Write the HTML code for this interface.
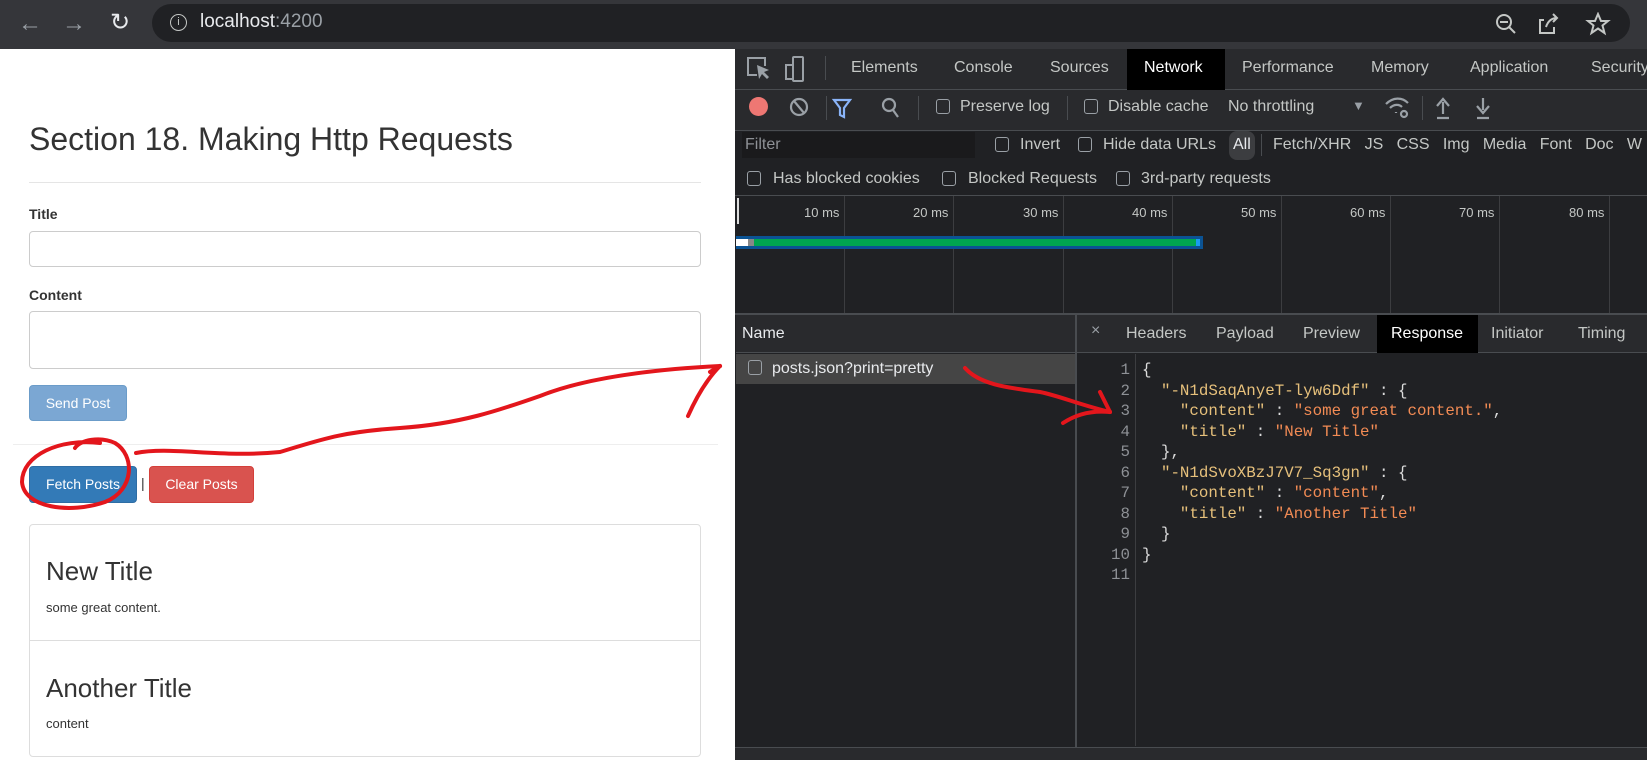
<!DOCTYPE html>
<html><head><meta charset="utf-8"><style>
*{box-sizing:border-box;margin:0;padding:0}
body{width:1647px;height:760px;overflow:hidden;background:#fff;font-family:"Liberation Sans",sans-serif;position:relative}
.a{position:absolute;white-space:nowrap}
.dt{color:#c4c7c5;font-size:16px}
.cb{position:absolute;width:14px;height:15px;border:1.5px solid #9aa0a6;border-radius:3px}
.mono{font-family:"Liberation Mono",monospace;font-size:15.8px;line-height:20.5px}
.k{color:#e6c07b}.v{color:#f28b54}.p{color:#dcdcdc}
</style></head><body>
<!-- browser bar -->
<div class="a" style="left:0;top:0;width:1647px;height:49px;background:#35363a"></div>
<div class="a" style="left:152px;top:4px;width:1478px;height:38px;background:#202124;border-radius:19px"></div>
<div class="a" style="left:18px;top:10px;color:#9aa0a6;font-size:24px">←</div>
<div class="a" style="left:62px;top:10px;color:#9aa0a6;font-size:24px">→</div>
<div class="a" style="left:110px;top:8px;color:#e8eaed;font-size:24px">↻</div>
<div class="a" style="left:170px;top:14px;width:17px;height:17px;border:1.5px solid #c4c7c5;border-radius:50%;color:#c4c7c5;font-size:11px;text-align:center;line-height:14px">i</div>
<div class="a" style="left:200px;top:11px;font-size:19px;color:#e8eaed">localhost<span style="color:#9aa0a6">:4200</span></div>
<svg class="a" style="left:1494px;top:12px" width="130" height="24" fill="none" stroke="#c4c7c5" stroke-width="2">
<circle cx="10" cy="10" r="7"/><path d="M15 15 L21 21 M6 10 H14"/>
<path d="M50 8 H46 V21 H60 V15 M52 15 C54 9 58 6 63 6 M59 2 L63 6 L59 10"/>
<path d="M104 2 L107 9 L114 9 L108.5 13.5 L110.5 21 L104 16.5 L97.5 21 L99.5 13.5 L94 9 L101 9 Z"/>
</svg>

<!-- left page -->
<div class="a" style="left:29px;top:121px;font-size:32px;color:#333">Section 18. Making Http Requests</div>
<div class="a" style="left:29px;top:182px;width:672px;height:1px;background:#e5e5e5"></div>
<div class="a" style="left:29px;top:206px;font-size:14px;font-weight:bold;color:#333">Title</div>
<div class="a" style="left:29px;top:231px;width:672px;height:36px;border:1px solid #ccc;border-radius:4px"></div>
<div class="a" style="left:29px;top:287px;font-size:14px;font-weight:bold;color:#333">Content</div>
<div class="a" style="left:29px;top:311px;width:672px;height:58px;border:1px solid #ccc;border-radius:4px"></div>
<div class="a" style="left:29px;top:385px;width:98px;height:36px;background:#7ba7d3;border:1px solid #6b9cc9;border-radius:4px;color:#fff;font-size:14px;text-align:center;line-height:34px">Send Post</div>
<div class="a" style="left:13px;top:444px;width:705px;height:1px;background:#eee"></div>
<div class="a" style="left:29px;top:466px;width:108px;height:37px;background:#337ab7;border:1px solid #2e6da4;border-radius:4px;color:#fff;font-size:14px;text-align:center;line-height:35px">Fetch Posts</div>
<div class="a" style="left:141px;top:475px;font-size:14px;color:#333">|</div>
<div class="a" style="left:149px;top:466px;width:105px;height:37px;background:#d9534f;border:1px solid #d43f3a;border-radius:4px;color:#fff;font-size:14px;text-align:center;line-height:35px">Clear Posts</div>
<div class="a" style="left:29px;top:524px;width:672px;height:233px;border:1px solid #ddd;border-radius:4px"></div>
<div class="a" style="left:29px;top:640px;width:672px;height:1px;background:#ddd"></div>
<div class="a" style="left:46px;top:556px;font-size:26px;color:#333">New Title</div>
<div class="a" style="left:46px;top:600px;font-size:13px;color:#333">some great content.</div>
<div class="a" style="left:46px;top:673px;font-size:26px;color:#333">Another Title</div>
<div class="a" style="left:46px;top:716px;font-size:13px;color:#333">content</div>

<!-- devtools -->
<div class="a" style="left:735px;top:49px;width:912px;height:711px;background:#202124"></div>
<div class="a" style="left:735px;top:49px;width:912px;height:41px;background:#292a2d;border-bottom:1px solid #494c50"></div>
<div class="a" style="left:1127px;top:49px;width:98px;height:41px;background:#000"></div>
<svg class="a" style="left:745px;top:55px" width="60" height="30" fill="none" stroke="#9aa0a6" stroke-width="2">
<path d="M12 20 H3 V3 H20 V11"/><path d="M12 10 L14 24 L17 19 L22 24 L24 22 L19 17 L24 15 Z" fill="#9aa0a6" stroke="none"/>
<rect x="48" y="2" width="10" height="24" rx="1"/><rect x="41" y="10" width="7" height="14"/>
</svg>
<div class="a" style="left:825px;top:56px;width:1px;height:24px;background:#494c50"></div>
<div class="a dt" style="left:851px;top:59px">Elements</div>
<div class="a dt" style="left:954px;top:59px">Console</div>
<div class="a dt" style="left:1050px;top:59px">Sources</div>
<div class="a dt" style="left:1144px;top:59px;color:#fff">Network</div>
<div class="a dt" style="left:1242px;top:59px">Performance</div>
<div class="a dt" style="left:1371px;top:59px">Memory</div>
<div class="a dt" style="left:1470px;top:59px">Application</div>
<div class="a dt" style="left:1591px;top:59px">Security</div>
<!-- toolbar -->
<div class="a" style="left:735px;top:90px;width:912px;height:41px;background:#292a2d;border-bottom:1px solid #494c50"></div>
<div class="a" style="left:749px;top:97px;width:19px;height:19px;border-radius:50%;background:#ee7773"></div>
<svg class="a" style="left:788px;top:95px" width="130" height="26" fill="none" stroke="#9aa0a6" stroke-width="2.2">
<circle cx="11" cy="12" r="8"/><path d="M6 6 L16 18"/>
<path d="M46 5 H62 L56 13 V22 L52 20 V13 Z" stroke="#8ab4f8"/>
<circle cx="101" cy="10" r="6"/><path d="M105 15 L110 22"/>
</svg>
<div class="a" style="left:826px;top:96px;width:1px;height:24px;background:#494c50"></div>
<div class="a" style="left:918px;top:96px;width:1px;height:24px;background:#494c50"></div>
<div class="cb" style="left:936px;top:99px"></div><div class="a dt" style="left:960px;top:98px">Preserve log</div>
<div class="a" style="left:1067px;top:96px;width:1px;height:24px;background:#494c50"></div>
<div class="cb" style="left:1084px;top:99px"></div><div class="a dt" style="left:1108px;top:98px">Disable cache</div>
<div class="a dt" style="left:1228px;top:98px">No throttling</div>
<div class="a" style="left:1352px;top:98px;color:#9aa0a6;font-size:13px">▼</div>
<svg class="a" style="left:1384px;top:94px" width="120" height="28" fill="none" stroke="#9aa0a6" stroke-width="2.2">
<path d="M2 10 C9 3 18 3 24 9 M6 14 C10 10 15 10 18 13 M12 18 L12 19"/><circle cx="20" cy="20" r="3"/>
<path d="M59 20 V8 M53 12 L59 5 L65 12 M53 24 H65" />
<path d="M99 4 V16 M93 12 L99 19 L105 12 M93 24 H105"/>
</svg>
<div class="a" style="left:1422px;top:96px;width:1px;height:24px;background:#494c50"></div>
<!-- filter -->
<div class="a" style="left:742px;top:132px;width:233px;height:26px;background:#1a1a1c"></div>
<div class="a dt" style="left:745px;top:136px;color:#8e9196">Filter</div>
<div class="cb" style="left:995px;top:137px"></div><div class="a dt" style="left:1020px;top:136px">Invert</div>
<div class="cb" style="left:1078px;top:137px"></div><div class="a dt" style="left:1103px;top:136px">Hide data URLs</div>
<div class="a" style="left:1229px;top:131px;width:26px;height:29px;background:#3c3d40;border-radius:8px"></div>
<div class="a dt" style="left:1233px;top:136px;color:#e8eaed">All</div>
<div class="a" style="left:1261px;top:134px;width:1px;height:22px;background:#494c50"></div>
<div class="a dt" style="left:1273px;top:136px">Fetch/XHR&nbsp;&nbsp; JS&nbsp;&nbsp; CSS&nbsp;&nbsp; Img&nbsp;&nbsp; Media&nbsp;&nbsp; Font&nbsp;&nbsp; Doc&nbsp;&nbsp; W</div>
<div class="cb" style="left:747px;top:171px"></div><div class="a dt" style="left:773px;top:170px">Has blocked cookies</div>
<div class="cb" style="left:942px;top:171px"></div><div class="a dt" style="left:968px;top:170px">Blocked Requests</div>
<div class="cb" style="left:1116px;top:171px"></div><div class="a dt" style="left:1141px;top:170px">3rd-party requests</div>
<div class="a" style="left:735px;top:195px;width:912px;height:1px;background:#494c50"></div>
<!-- timeline -->
<div class="a" style="left:737px;top:198px;width:2px;height:26px;background:#ddd"></div>
<div class="a" style="left:844px;top:196px;width:1px;height:117px;background:#3c3d40"></div>
<div class="a" style="left:953px;top:196px;width:1px;height:117px;background:#3c3d40"></div>
<div class="a" style="left:1063px;top:196px;width:1px;height:117px;background:#3c3d40"></div>
<div class="a" style="left:1172px;top:196px;width:1px;height:117px;background:#3c3d40"></div>
<div class="a" style="left:1281px;top:196px;width:1px;height:117px;background:#3c3d40"></div>
<div class="a" style="left:1390px;top:196px;width:1px;height:117px;background:#3c3d40"></div>
<div class="a" style="left:1499px;top:196px;width:1px;height:117px;background:#3c3d40"></div>
<div class="a" style="left:1609px;top:196px;width:1px;height:117px;background:#3c3d40"></div>
<div class="a" style="font-size:13px;color:#c4c7c5;top:205px;left:804px">10 ms</div>
<div class="a" style="font-size:13px;color:#c4c7c5;top:205px;left:913px">20 ms</div>
<div class="a" style="font-size:13px;color:#c4c7c5;top:205px;left:1023px">30 ms</div>
<div class="a" style="font-size:13px;color:#c4c7c5;top:205px;left:1132px">40 ms</div>
<div class="a" style="font-size:13px;color:#c4c7c5;top:205px;left:1241px">50 ms</div>
<div class="a" style="font-size:13px;color:#c4c7c5;top:205px;left:1350px">60 ms</div>
<div class="a" style="font-size:13px;color:#c4c7c5;top:205px;left:1459px">70 ms</div>
<div class="a" style="font-size:13px;color:#c4c7c5;top:205px;left:1569px">80 ms</div>
<div class="a" style="left:736px;top:236px;width:467px;height:13px;background:#0b5394"></div>
<div class="a" style="left:736px;top:239px;width:12px;height:7px;background:#fff"></div>
<div class="a" style="left:748px;top:239px;width:6px;height:7px;background:#888"></div>
<div class="a" style="left:754px;top:239px;width:442px;height:7px;background:#00a650"></div>
<div class="a" style="left:1196px;top:239px;width:4px;height:7px;background:#1a9bf0"></div>
<div class="a" style="left:735px;top:313px;width:912px;height:2px;background:#494c50"></div>
<!-- name panel -->
<div class="a" style="left:736px;top:315px;width:339px;height:38px;background:#292a2d;border-bottom:1px solid #494c50"></div>
<div class="a dt" style="left:742px;top:325px;color:#e8eaed">Name</div>
<div class="a" style="left:736px;top:354px;width:339px;height:30px;background:#454545"></div>
<div class="cb" style="left:748px;top:360px"></div>
<div class="a dt" style="left:772px;top:360px;color:#e8eaed">posts.json?print=pretty</div>
<div class="a" style="left:1075px;top:315px;width:2px;height:445px;background:#494c50"></div>
<div class="a" style="left:1077px;top:315px;width:570px;height:38px;background:#292a2d;border-bottom:1px solid #494c50"></div>
<div class="a" style="left:1377px;top:315px;width:101px;height:38px;background:#000"></div>
<div class="a dt" style="left:1091px;top:322px;color:#9aa0a6">×</div>
<div class="a dt" style="left:1126px;top:325px">Headers</div>
<div class="a dt" style="left:1216px;top:325px">Payload</div>
<div class="a dt" style="left:1303px;top:325px">Preview</div>
<div class="a dt" style="left:1391px;top:325px;color:#fff">Response</div>
<div class="a dt" style="left:1491px;top:325px">Initiator</div>
<div class="a dt" style="left:1578px;top:325px">Timing</div>
<div class="a" style="left:1135px;top:354px;width:1px;height:392px;background:#3c3d40"></div>
<div class="a mono" style="left:1094px;top:360px;width:36px;text-align:right;color:#8e9196">1<br>2<br>3<br>4<br>5<br>6<br>7<br>8<br>9<br>10<br>11</div>
<div class="a mono p" style="left:1142px;top:360px">{<br>&nbsp;&nbsp;<span class="k">"-N1dSaqAnyeT-lyw6Ddf"</span> : {<br>&nbsp;&nbsp;&nbsp;&nbsp;<span class="k">"content"</span> : <span class="v">"some great content."</span>,<br>&nbsp;&nbsp;&nbsp;&nbsp;<span class="k">"title"</span> : <span class="v">"New Title"</span><br>&nbsp;&nbsp;},<br>&nbsp;&nbsp;<span class="k">"-N1dSvoXBzJ7V7_Sq3gn"</span> : {<br>&nbsp;&nbsp;&nbsp;&nbsp;<span class="k">"content"</span> : <span class="v">"content"</span>,<br>&nbsp;&nbsp;&nbsp;&nbsp;<span class="k">"title"</span> : <span class="v">"Another Title"</span><br>&nbsp;&nbsp;}<br>}</div>
<div class="a" style="left:735px;top:747px;width:912px;height:13px;background:#292a2d;border-top:1px solid #494c50"></div>

<!-- annotations -->
<svg class="a" style="left:0;top:0" width="1647" height="760">
<g fill="none" stroke="#e3161c" stroke-width="4" stroke-linecap="round">
<path d="M100,443 C60,438 22,455 22,482 C24,508 70,514 105,502 C135,490 135,455 115,443 C100,436 80,440 75,448"/>
<path d="M136,453 C170,446 220,458 280,452 C320,440 340,432 400,428 C460,424 500,410 540,396 C580,380 640,370 720,366"/>
<path d="M720,366 C706,380 696,398 688,416"/>
<path d="M720,366 L710,372"/>
<path d="M965,368 C980,385 1010,388 1040,392 C1060,396 1080,405 1110,412"/>
<path d="M1110,412 C1090,410 1075,415 1063,423"/>
<path d="M1110,412 L1100,392"/>
</g></svg>
</body></html>
